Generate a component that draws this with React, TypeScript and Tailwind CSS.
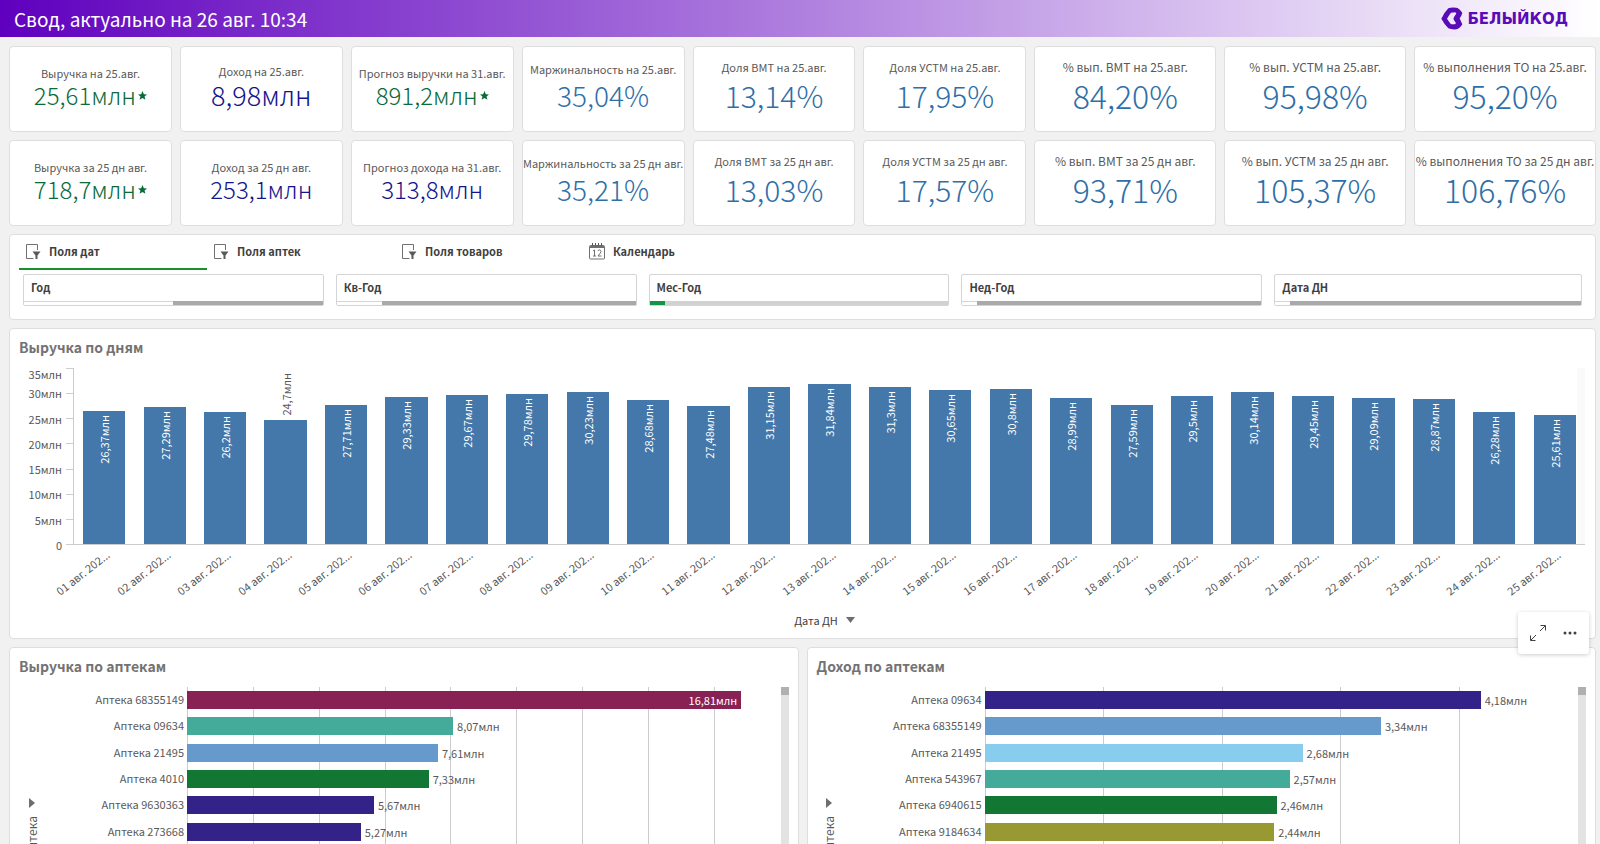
import React from "react";
import clsx from "clsx";

type Size = "sm" | "md" | "lg" | "xl" | "wide";

const VALUE_SIZE = {
  sm: "text-[24px]",
  md: "text-[27px]",
  lg: "text-[28px]",
  xl: "text-[30px]",
  wide: "text-[32px]",
};

const LABEL_STYLE = {
  sm: "text-[11px]",
  md: "text-[11px] mb-0.5",
  lg: "text-[11px] mb-1",
  xl: "text-[11px] mb-1.5",
  wide: "text-[12px] mb-1.5",
};

const GREEN = "text-[#0b6b38]";
const NAVY = "text-[#14148c]";
const BLUE = "text-[#2f6fa8]";

type Kpi = {
  label: string;
  value: string;
  size: Size;
  color: string;
  star?: boolean;
};

const kpis: Kpi[] = [
  { label: "Выручка на 25.авг.", value: "25,61млн", size: "sm", color: GREEN, star: true },
  { label: "Доход на 25.авг.", value: "8,98млн", size: "md", color: NAVY },
  { label: "Прогноз выручки на 31.авг.", value: "891,2млн", size: "sm", color: GREEN, star: true },
  { label: "Маржинальность на 25.авг.", value: "35,04%", size: "lg", color: BLUE },
  { label: "Доля ВМТ на 25.авг.", value: "13,14%", size: "xl", color: BLUE },
  { label: "Доля УСТМ на 25.авг.", value: "17,95%", size: "xl", color: BLUE },
  { label: "% вып. ВМТ на 25.авг.", value: "84,20%", size: "wide", color: BLUE },
  { label: "% вып. УСТМ на 25.авг.", value: "95,98%", size: "wide", color: BLUE },
  { label: "% выполнения ТО на 25.авг.", value: "95,20%", size: "wide", color: BLUE },
  { label: "Выручка за 25 дн авг.", value: "718,7млн", size: "sm", color: GREEN, star: true },
  { label: "Доход за 25 дн авг.", value: "253,1млн", size: "sm", color: NAVY },
  { label: "Прогноз дохода на 31.авг.", value: "313,8млн", size: "sm", color: NAVY },
  { label: "Маржинальность за 25 дн авг.", value: "35,21%", size: "lg", color: BLUE },
  { label: "Доля ВМТ за 25 дн авг.", value: "13,03%", size: "xl", color: BLUE },
  { label: "Доля УСТМ за 25 дн авг.", value: "17,57%", size: "xl", color: BLUE },
  { label: "% вып. ВМТ за 25 дн авг.", value: "93,71%", size: "wide", color: BLUE },
  { label: "% вып. УСТМ за 25 дн авг.", value: "105,37%", size: "wide", color: BLUE },
  { label: "% выполнения ТО за 25 дн авг.", value: "106,76%", size: "wide", color: BLUE },
];

const fields = [
  { name: "Год", part: 50 },
  { name: "Кв-Год", part: 15 },
  { name: "Мес-Год", part: 5, selected: true },
  { name: "Нед-Год", part: 5 },
  { name: "Дата ДН", part: 5 },
];

const days = [
  26.37, 27.29, 26.2, 24.7, 27.71, 29.33, 29.67, 29.78, 30.23, 28.68, 27.48,
  31.15, 31.84, 31.3, 30.65, 30.8, 28.99, 27.59, 29.5, 30.14, 29.45, 29.09,
  28.87, 26.28, 25.61,
];

const MAX_DAY = 35;

const ticks = ["35млн", "30млн", "25млн", "20млн", "15млн", "10млн", "5млн", "0"];

type Row = { name: string; value: number; color: string };

const revenue: Row[] = [
  { name: "Аптека 68355149", value: 16.81, color: "bg-[#882255]" },
  { name: "Аптека 09634", value: 8.07, color: "bg-[#44aa99]" },
  { name: "Аптека 21495", value: 7.61, color: "bg-[#6699cc]" },
  { name: "Аптека 4010", value: 7.33, color: "bg-[#117733]" },
  { name: "Аптека 9630363", value: 5.67, color: "bg-[#332288]" },
  { name: "Аптека 273668", value: 5.27, color: "bg-[#332288]" },
];

const income: Row[] = [
  { name: "Аптека 09634", value: 4.18, color: "bg-[#332288]" },
  { name: "Аптека 68355149", value: 3.34, color: "bg-[#6699cc]" },
  { name: "Аптека 21495", value: 2.68, color: "bg-[#88ccee]" },
  { name: "Аптека 543967", value: 2.57, color: "bg-[#44aa99]" },
  { name: "Аптека 6940615", value: 2.46, color: "bg-[#117733]" },
  { name: "Аптека 9184634", value: 2.44, color: "bg-[#999933]" },
];

const format = (value: number) => `${String(value).replace(".", ",")}млн`;

const Logo = () => (
  <div className="flex items-center gap-1 text-[#5a0bb8]">
    <svg width="22" height="23" viewBox="0 0 66 69" aria-hidden="true">
      <path
        fill="currentColor"
        fillRule="evenodd"
        d="M22 4Q30 0 46 2Q56 4 64 18Q62 26 56 34Q60 44 64 52Q56 66 46 67Q30 68 22 64Q10 52 1 35Q10 16 22 4ZM30 17Q24 24 18 35Q24 44 30 52H42L45 48Q40 42 37 35Q40 26 46 20L43 16Z"
      />
    </svg>
    <span className="font-['DejaVu_Sans',sans-serif] text-[15px] leading-5 font-bold">
      БЕЛЫЙКОД
    </span>
  </div>
);

const Star = () => (
  <svg width="9" height="9" viewBox="0 0 20 20" aria-hidden="true">
    <polygon
      fill="currentColor"
      points="10,0 13,7 20,7.5 14.5,12 16.500,19.500 10,15.500 3.500,19.500 5.500,12 0,7.500 7,7"
    />
  </svg>
);

const FilterIcon = () => (
  <svg width="16" height="17" viewBox="0 0 16 17" fill="none" aria-hidden="true">
    <path d="M8.500 15.500H1.500V1.500H12.500V7" stroke="#707070" />
    <path d="M7.500 8.500H15.500L12.500 12.500V16H10.500V12.500Z" fill="#595959" />
  </svg>
);

const CalendarIcon = () => (
  <svg width="16" height="17" viewBox="0 0 16 17" fill="none" aria-hidden="true">
    <rect x="0.500" y="2.500" width="15" height="13.500" rx="1" stroke="#707070" />
    <path d="M1 4H15" stroke="#707070" strokeWidth="2" />
    <path d="M3.500 0V3M6.500 0V3M9.500 0V3M12.500 0V3" stroke="#595959" />
    <path d="M4 8L5.500 7V13M4 13H7M9 8Q9 7 10.500 7Q12 7 12 8.500Q12 9.500 9 13H12.500" stroke="#707070" />
  </svg>
);

const tabs = [
  { name: "Поля дат", icon: <FilterIcon /> },
  { name: "Поля аптек", icon: <FilterIcon /> },
  { name: "Поля товаров", icon: <FilterIcon /> },
  { name: "Календарь", icon: <CalendarIcon /> },
];

const Card = ({
  className,
  children,
}: {
  className?: string;
  children: React.ReactNode;
}) => (
  <section
    className={clsx("bg-white border border-[#dedede] rounded-[4px]", className)}
  >
    {children}
  </section>
);

const KpiCard = ({ label, value, size, color, star }: Kpi) => (
  <Card className="h-[86px] min-w-0 pb-[22px] flex flex-col justify-end items-center whitespace-nowrap">
    <div className={clsx("leading-4 text-[#595959]", LABEL_STYLE[size])}>
      {label}
    </div>
    <div
      className={clsx(
        "flex items-center gap-0.5 leading-7 font-light",
        VALUE_SIZE[size],
        color
      )}
    >
      {value}
      {star && <Star />}
    </div>
  </Card>
);

const Filters = () => (
  <Card className="h-[86px] pl-[9px]">
    <div role="tablist" className="flex">
      {tabs.map(({ name, icon }, index) => (
        <button
          key={name}
          type="button"
          role="tab"
          aria-selected={index === 0}
          className={clsx(
            "w-[188px] h-[35px] pl-1.5 pb-px flex items-center gap-2 border-b-2 text-[11px] font-bold text-[#404040]",
            index === 0 ? "border-[#1a8f2e]" : "border-transparent"
          )}
        >
          {icon}
          {name}
        </button>
      ))}
    </div>
    <div className="mt-1 pl-1 pr-[13px] grid grid-cols-[repeat(4,301fr)_308fr] gap-3">
      {fields.map(({ name, part, selected }) => (
        <button
          key={name}
          type="button"
          className="h-8 flex flex-col border border-[#d4d4d4] rounded-[2px] text-left"
        >
          <span className="px-[7px] pb-0.5 text-[11px] leading-6 font-bold text-[#404040]">
            {name}
          </span>
          <span
            className={clsx(
              "w-full h-1 flex",
              selected ? "bg-[#d2d2d2]" : "bg-[#a9a9a9]"
            )}
          >
            <span
              className={clsx(
                selected ? "bg-[#16924a]" : "bg-white border-t border-[#d4d4d4]"
              )}
              style={{ width: `${part}%` }}
            />
          </span>
        </button>
      ))}
    </div>
  </Card>
);

const Title = ({ children }: { children: React.ReactNode }) => (
  <h2 className="pl-[9px] pt-2 pb-px text-[14px] leading-5 font-bold text-[#737373]">
    {children}
  </h2>
);

const DaysChart = () => (
  <Card className="h-[311px] relative">
    <Title>Выручка по дням</Title>
    <div className="mt-[10px] pr-[10px] flex text-[11px] leading-[14px] text-[#595959]">
      <div className="w-[64px] h-[177px] flex flex-col justify-between border-r border-[#cccccc] leading-3">
        {ticks.map((tick, index) => (
          <div
            key={tick}
            className={clsx(
              "h-0 flex justify-end gap-1",
              index === 0 ? "items-start" : "items-center"
            )}
          >
            {tick}
            <span className="w-[7px] border-t border-[#cccccc]" />
          </div>
        ))}
      </div>
      <div className="flex-1 flex">
        {days.map((value, index) => (
          <div key={index} className="flex-1">
            <div
              className={clsx(
                "h-[177px] flex flex-col justify-end items-center border-b border-[#cccccc]",
                index === days.length - 1 && "shadow-[inset_-8px_0_#fafafa]"
              )}
            >
              {value < 25 && (
                <span className="mb-1 [writing-mode:vertical-rl] rotate-180">
                  {format(value)}
                </span>
              )}
              <div
                className="w-[70%] pt-1 flex justify-center bg-[#4477aa] text-white"
                style={{ height: `${(value / MAX_DAY) * 100}%` }}
              >
                {value >= 25 && (
                  <span className="h-fit [writing-mode:vertical-rl] rotate-180">
                    {format(value)}
                  </span>
                )}
              </div>
            </div>
            <div className="h-16 relative">
              <span className="absolute right-1/2 top-[3px] origin-top-right -rotate-38 whitespace-nowrap leading-3">
                {String(index + 1).padStart(2, "0")} авг. 202...
              </span>
            </div>
          </div>
        ))}
      </div>
    </div>
    <button
      type="button"
      className="mx-auto pl-11 mt-px flex items-center gap-2 text-[11px] leading-5 text-[#404040]"
    >
      Дата ДН
      <svg width="9" height="6" viewBox="0 0 9 6" aria-hidden="true">
        <path d="M0 0H9L4.500 6Z" fill="#6e6e6e" />
      </svg>
    </button>
    <div className="absolute right-[6px] -bottom-4 z-10 w-[71px] h-[42px] px-3 flex items-center justify-between bg-white rounded-[3px] shadow-[0_1px_4px_rgba(0,0,0,0.2)]">
      <button type="button" aria-label="Развернуть">
        <svg width="16" height="16" viewBox="0 0 16 16" fill="none" stroke="#404040">
          <path d="M10 6L15 1M10.500 0.500H15.500V5.500M6 10L1 15M0.500 10.500V15.500H5.500" />
        </svg>
      </button>
      <button type="button" aria-label="Меню">
        <svg width="14" height="4" viewBox="0 0 14 4" fill="#404040">
          <circle cx="2" cy="2" r="1.500" />
          <circle cx="7" cy="2" r="1.500" />
          <circle cx="12" cy="2" r="1.500" />
        </svg>
      </button>
    </div>
  </Card>
);

const PharmacyChart = ({
  title,
  rows,
  max,
  lines,
}: {
  title: string;
  rows: Row[];
  max: number;
  lines: number;
}) => (
  <Card className="h-[420px]">
    <Title>{title}</Title>
    <div className="mt-[10px] pr-[9px] h-[372px] flex text-[11px] text-[#595959]">
      <button
        type="button"
        className="w-[43px] pt-[111px] flex flex-col items-center gap-2 text-[12px] leading-[14px]"
      >
        <svg width="6" height="10" viewBox="0 0 6 10" aria-hidden="true">
          <path d="M0 0L6 5L0 10Z" fill="#6e6e6e" />
        </svg>
        <span className="[writing-mode:vertical-rl] rotate-180">Аптека</span>
      </button>
      <div className="w-[134px] h-[158px] pr-[3px] grid grid-rows-6 text-right">
        {rows.map(({ name }) => (
          <div key={name} className="leading-6">
            {name}
          </div>
        ))}
      </div>
      <div className="flex-1 grid">
        <div
          className="[grid-area:1/1] grid border-l border-[#cccccc]"
          style={{ gridTemplateColumns: `repeat(${lines}, 1fr)` }}
        >
          {Array.from({ length: lines }, (_, index) => (
            <div
              key={index}
              className={clsx(index < lines - 1 && "border-r border-[#cccccc]")}
            />
          ))}
        </div>
        <div className="[grid-area:1/1] h-[158px] grid grid-rows-6">
          {rows.map(({ name, value, color }) => (
            <div key={name} className="flex items-center gap-1 leading-[18px]">
              <div
                className={clsx("h-[18px] pr-1 text-right text-white", color)}
                style={{ width: `${(value / max) * 100}%` }}
              >
                {value > max * 0.9 && format(value)}
              </div>
              {value <= max * 0.9 && format(value)}
            </div>
          ))}
        </div>
      </div>
      <div className="w-2 bg-[#e3e3e3]">
        <div className="h-2 bg-[#b0b0b0]" />
      </div>
    </div>
  </Card>
);

const App = () => {
  return (
    <div className="h-screen overflow-hidden bg-[#f1f1f1] font-['Noto_Sans_CJK_SC',sans-serif]">
      <header className="h-[37px] pl-[14px] pr-8 flex items-center justify-between bg-linear-to-r/srgb from-[#5f00be] to-white">
        <h1 className="text-[19px] leading-7 text-white">
          Свод, актуально на 26 авг. 10:34
        </h1>
        <Logo />
      </header>
      <main className="pt-[9px] pl-[9px] pr-1 flex flex-col gap-2">
        <div className="grid grid-cols-[repeat(6,minmax(0,163fr))_repeat(3,minmax(0,182fr))] gap-2">
          {kpis.map((kpi) => (
            <KpiCard key={kpi.label} {...kpi} />
          ))}
        </div>
        <Filters />
        <DaysChart />
        <div className="grid grid-cols-2 gap-2">
          <PharmacyChart title="Выручка по аптекам" rows={revenue} max={18} lines={9} />
          <PharmacyChart title="Доход по аптекам" rows={income} max={5} lines={5} />
        </div>
      </main>
    </div>
  );
};

export default App;
